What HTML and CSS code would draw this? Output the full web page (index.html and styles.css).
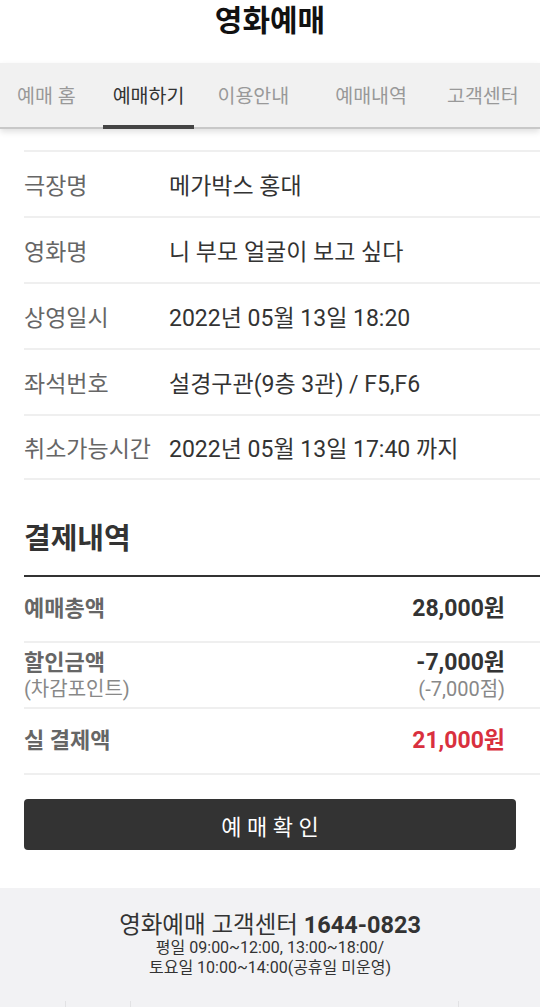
FILE: index.html
```html
<!DOCTYPE html>
<html lang="ko">
<head>
    <meta charset="UTF-8">
    <title>영화예매</title>
    <link rel="stylesheet" href="styles.css">
</head>
<body>
<header class="top">
    <h1>영화예매</h1>
</header>
<nav class="tabs">
    <a href="#">예매 홈</a>
    <a href="#" class="on">예매하기</a>
    <a href="#">이용안내</a>
    <a href="#">예매내역</a>
    <a href="#">고객센터</a>
</nav>
<div class="wrap">
    <ul class="info">
        <li><span class="tit">극장명</span><span class="txt">메가박스 홍대</span></li>
        <li><span class="tit">영화명</span><span class="txt">니 부모 얼굴이 보고 싶다</span></li>
        <li><span class="tit">상영일시</span><span class="txt">2022년 05월 13일 18:20</span></li>
        <li><span class="tit">좌석번호</span><span class="txt">설경구관(9층 3관) / F5,F6</span></li>
        <li><span class="tit">취소가능시간</span><span class="txt">2022년 05월 13일 17:40 까지</span></li>
    </ul>

    <h2 class="pay-tit">결제내역</h2>
    <ul class="pay">
        <li>
            <div class="tit">예매총액</div>
            <div class="price">28,000원</div>
        </li>
        <li>
            <div class="tit">할인금액<small>(차감포인트)</small></div>
            <div class="price">-7,000원<small>(-7,000점)</small></div>
        </li>
        <li>
            <div class="tit">실 결제액</div>
            <div class="price red">21,000원</div>
        </li>
    </ul>

    <button class="btn">예 매 확 인</button>
</div>
<footer class="foot">
    <p class="cs">영화예매 고객센터 <b>1644-0823</b></p>
    <p class="time">평일 09:00~12:00, 13:00~18:00/<br>토요일 10:00~14:00(공휴일 미운영)</p>
    <div class="links">
        <span></span>
        <span></span>
        <span class="wide"></span>
        <span></span>
    </div>
</footer>
</body>
</html>
```

FILE: styles.css
```css
*{
    margin: 0;
    padding: 0;
    box-sizing: border-box;
}
body{
    font-family: Roboto, "Noto Sans CJK KR", sans-serif;
    color: #333;
    background-color: #fff;
}
ul{
    list-style: none;
}
a{
    text-decoration: none;
}
.top{
    height: 63px;
    display: flex;
    justify-content: center;
    align-items: flex-start;
}
.top h1{
    font-size: 30px;
    line-height: 41px;
    font-weight: bold;
    color: #111;
}
.tabs{
    display: flex;
    height: 66px;
    background-color: #f1f1f1;
    border-bottom: 2px solid #c8c8c8;
    box-shadow: 0 3px 6px rgba(0,0,0,0.12);
    padding-left: 7px;
}
.tabs a{
    position: relative;
    display: flex;
    align-items: center;
    font-size: 19.5px;
    color: #999;
    padding: 0 10px 2px;
    white-space: nowrap;
}
.tabs a:nth-child(1){ margin-right: 17px; }
.tabs a:nth-child(2){ margin-right: 13px; }
.tabs a:nth-child(3){ margin-right: 26px; }
.tabs a:nth-child(4){ margin-right: 20px; }
.tabs a.on{
    color: #333;
}
.tabs a.on:after{
    content: '';
    position: absolute;
    left: 0;
    right: 0;
    bottom: -2px;
    height: 4px;
    background: #444;
}
.wrap{
    padding: 21px 0 38px 24px;
}
.info li{
    display: flex;
    align-items: center;
    height: 66px;
    border-top: 2px solid #efefef;
    font-size: 23px;
}
.info li:last-child{
    border-bottom: 2px solid #efefef;
}
.info .tit{
    width: 145px;
    color: #666;
    white-space: nowrap;
}
.info .txt{
    color: #333;
}
.pay-tit{
    font-size: 29px;
    font-weight: bold;
    color: #333;
    line-height: 38px;
    padding: 40px 0 17px;
}
.pay{
    border-top: 2px solid #333;
}
.pay li{
    display: flex;
    justify-content: space-between;
    align-items: center;
    height: 66px;
    padding-right: 35px;
    border-bottom: 2px solid #efefef;
    font-weight: bold;
}
.pay .tit{
    font-size: 22px;
    color: #666;
    line-height: 28px;
}
.pay .price{
    font-size: 23px;
    color: #333;
    text-align: right;
    line-height: 28px;
}
.pay small{
    display: block;
    font-size: 20px;
    font-weight: normal;
    color: #888;
    line-height: 24px;
}
.pay .red{
    color: #d9303e;
}
.btn{
    display: block;
    width: 492px;
    height: 51px;
    margin-top: 24px;
    border: none;
    border-radius: 4px;
    background-color: #333;
    color: #fff;
    font-family: inherit;
    font-size: 22px;
}
.foot{
    background-color: #f2f2f4;
    padding: 24px 0 0;
    text-align: center;
}
.foot .cs{
    font-size: 23.5px;
    line-height: 26px;
    color: #333;
}
.foot .time{
    font-size: 16px;
    line-height: 20px;
    color: #333;
}
.links{
    display: flex;
    height: 40px;
    margin-top: 23px;
}
.links span{
    width: 65px;
    border-left: 1px solid #e2e2e4;
}
.links span:first-child{
    border-left: none;
}
.links span.wide{
    width: 328px;
}
```
